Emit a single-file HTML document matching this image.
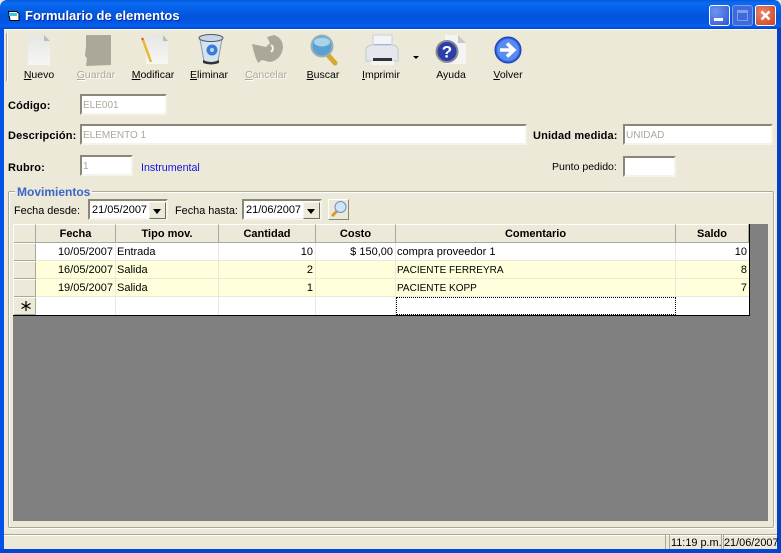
<!DOCTYPE html>
<html><head><meta charset="utf-8"><style>
html,body{margin:0;padding:0;background:#ece9d8}
#w{position:relative;width:781px;height:553px;overflow:hidden;background:#ece9d8;font-family:"Liberation Sans",sans-serif;font-size:11px;color:#000}
#w div{position:absolute;box-sizing:border-box;white-space:nowrap}
.tl{top:69px;width:60px;text-align:center;line-height:13px;font-size:10.500px}
.dis{color:#aca899;text-shadow:1px 1px 0 #fff}
u{text-decoration:underline}
.lb{font-weight:bold;line-height:14px;letter-spacing:.15px}
.in{background:#fff;border:2px solid;border-color:#8a8778 #f5f4ea #f5f4ea #8a8778;color:#aca899;padding:3px 1px 0;line-height:13px;font-size:10px}
.hd{top:224px;height:19px;background:#ece9d8;border-right:1px solid #aca899;border-bottom:1px solid #aca899;border-top:1px solid #fff;font-weight:bold;text-align:center;line-height:19px}
.rh{left:14px;width:22px;height:18px;background:#ece9d8;border-top:1px solid #fff;border-right:1px solid #aca899;border-bottom:1px solid #aca899}
.c{height:18px;line-height:19px;border-right:1px solid #ece9d8;border-bottom:1px solid #ece9d8;padding:0 2px 0 1px}
.up{font-size:10px}
.r{text-align:right}
.dp{background:#fff;border:2px solid;border-color:#8a8778 #f5f4ea #f5f4ea #8a8778;line-height:19px;font-size:11px;padding-left:2px}
.btn{width:17px;height:17px;background:#ece9d8;border:1px solid;border-color:#f5f4ea #716f64 #716f64 #f5f4ea;box-shadow:0 0 0 0 #000}
.btn:after{content:"";position:absolute;left:3px;top:6px;border-left:4.500px solid transparent;border-right:4.500px solid transparent;border-top:5px solid #000}
</style></head><body><div id="w">

<!-- title bar -->
<div style="left:0;top:0;width:781px;height:29px;background:linear-gradient(180deg,#0758d8 0,#0a6cf2 3px,#0562ea 8px,#0255dc 16px,#0355e4 22px,#0460f0 26px,#0346cc 29px);border-radius:7px 7px 0 0"></div>
<div style="left:0;top:29px;width:4px;height:524px;background:#0552e6"></div>
<div style="left:777px;top:29px;width:4px;height:524px;background:#0340c8"></div>
<div style="left:0;top:549px;width:781px;height:4px;background:#0346d4"></div>
<svg style="position:absolute;left:7px;top:10px" width="14" height="12"><path d="M1.500 1.500h8l2.500 2v7H3z" fill="#fff" stroke="#000"/><rect x="2" y="3" width="8" height="3" fill="#3ccbd4"/></svg>
<div style="left:25px;top:8px;color:#fff;font-weight:bold;font-size:13px;line-height:16px;text-shadow:1px 1px 0 #0a2a9a">Formulario de elementos</div>
<!-- window buttons -->
<div style="left:709px;top:5px;width:21px;height:21px;border:1px solid #fff;border-radius:3px;background:radial-gradient(circle at 30% 30%,#6f94f0,#2d55d8)"></div>
<div style="left:714px;top:18px;width:9px;height:3px;background:#fff"></div>
<div style="left:732px;top:5px;width:21px;height:21px;border:1px solid #7e9fe8;border-radius:3px;background:#3f69dc"></div>
<div style="left:737px;top:10px;width:11px;height:11px;border:1px solid #7e9fe8;border-top:3px solid #7e9fe8"></div>
<div style="left:755px;top:5px;width:21px;height:21px;border:1px solid #fff;border-radius:3px;background:radial-gradient(circle at 35% 35%,#e88a6c,#c8401c)"></div>
<svg style="position:absolute;left:760px;top:10px" width="11" height="11"><path d="M1.500 1.500l8 8M9.500 1.500l-8 8" stroke="#fff" stroke-width="2.400"/></svg>

<!-- toolbar -->
<div style="left:4px;top:29px;width:773px;height:1px;background:#fff"></div>
<div style="left:6px;top:33px;width:2px;height:48px;background:#aca899;border-right:1px solid #fff"></div>

<svg style="position:absolute;left:26px;top:34px" width="26" height="32"><defs><linearGradient id="g" x1="0" y1="0" x2="0" y2="1"><stop offset="0" stop-color="#e6e6e4"/><stop offset="1" stop-color="#f6f6f2"/></linearGradient></defs><path d="M2 1h16l6 6v24H2z" fill="url(#g)"/><path d="M18 1v6h6z" fill="#bbb"/></svg>
<svg style="position:absolute;left:84px;top:35px" width="28" height="31"><path d="M2 0h25v30l-25 1 1-8-2-2 1-10z" fill="#aca899"/></svg>
<svg style="position:absolute;left:141px;top:34px" width="28" height="32"><path d="M5 1h17l5 6v23H5z" fill="url(#g)"/><path d="M22 1v6h5z" fill="#bbb"/><path d="M2 6l8 22" stroke="#e8b838" stroke-width="2.500"/><path d="M1 4l1 2" stroke="#c05030" stroke-width="2"/></svg>
<svg style="position:absolute;left:197px;top:33px" width="28" height="33"><path d="M3 6l4 22q7 3 14 0l4-22q-11 4-22 0z" fill="#d4e4f0" stroke="#8a9aa8"/><ellipse cx="14" cy="5" rx="12" ry="3.500" fill="#c6d8e4" stroke="#556"/><path d="M6 27q8 4 16 0l0 3q-8 3-16 0z" fill="#333"/><circle cx="15" cy="17" r="5.500" fill="#3a7ad8"/><circle cx="15" cy="17" r="2" fill="#bcd8f4"/></svg>
<svg style="position:absolute;left:251px;top:34px" width="34" height="32"><path d="M1 10L15 13L19 9L16 3L23 1Q32 4 32 14Q30 26 19 28L11 26L7 29Q3 21 1 10z" fill="#aca899"/><path d="M20 11q4 3 0 7" fill="none" stroke="#f5f4ea" stroke-width="2"/></svg>
<svg style="position:absolute;left:310px;top:34px" width="28" height="32"><path d="M17 20l8 9" stroke="#d8a830" stroke-width="5" stroke-linecap="round"/><circle cx="12" cy="12" r="10.500" fill="#5aa0d0" stroke="#9ab0b8" stroke-width="2"/><ellipse cx="12" cy="8" rx="8" ry="4.500" fill="#a8d4ec"/></svg>
<svg style="position:absolute;left:365px;top:34px" width="34" height="32"><path d="M8 1h19v14H8z" fill="#f4f4f8" stroke="#ccd"/><rect x="9" y="10" width="17" height="8" fill="#7ea0dc"/><path d="M1 16q0-4 6-5h21q5 1 5 5v11H1z" fill="#e4e8ee" stroke="#bcc"/><rect x="8" y="24" width="19" height="3" fill="#333"/><rect x="6" y="27" width="23" height="4" fill="#f4f4f4"/></svg>
<svg style="position:absolute;left:413px;top:56px" width="6" height="3"><path d="M0 0h6L3 3z" fill="#000"/></svg>
<svg style="position:absolute;left:435px;top:34px" width="32" height="31"><path d="M10 1h13l8 8v21H10z" fill="#f4f4f2"/><path d="M23 1v8h8z" fill="#c8c8c8"/><circle cx="12" cy="17.500" r="10.500" fill="#2c3fa8" stroke="#8a8a92" stroke-width="2"/><text x="12" y="23.500" text-anchor="middle" font-family="Liberation Sans" font-weight="bold" font-size="17" fill="#fff">?</text></svg>
<svg style="position:absolute;left:494px;top:36px" width="28" height="28"><circle cx="14" cy="14" r="13" fill="#2a62e0" stroke="#1a3cb0"/><circle cx="14" cy="14" r="11" fill="#5a8cf0"/><path d="M6 14h12M13 7.500l7 6.500-7 6.500" fill="none" stroke="#fff" stroke-width="3.500"/></svg>

<div class="tl" style="left:9px"><u>N</u>uevo</div>
<div class="tl dis" style="left:66px"><u>G</u>uardar</div>
<div class="tl" style="left:123px"><u>M</u>odificar</div>
<div class="tl" style="left:179px"><u>E</u>liminar</div>
<div class="tl dis" style="left:236px"><u>C</u>ancelar</div>
<div class="tl" style="left:293px"><u>B</u>uscar</div>
<div class="tl" style="left:351px"><u>I</u>mprimir</div>
<div class="tl" style="left:421px">Ayuda</div>
<div class="tl" style="left:478px"><u>V</u>olver</div>

<!-- form -->
<div class="lb" style="left:8px;top:99px">Código:</div>
<div class="in" style="left:80px;top:94px;width:87px;height:21px">ELE001</div>
<div class="lb" style="left:8px;top:129px">Descripción:</div>
<div class="in" style="left:80px;top:124px;width:447px;height:21px">ELEMENTO 1</div>
<div class="lb" style="left:533px;top:129px">Unidad medida:</div>
<div class="in" style="left:623px;top:124px;width:150px;height:21px">UNIDAD</div>
<div class="lb" style="left:8px;top:161px">Rubro:</div>
<div class="in" style="left:80px;top:155px;width:53px;height:21px">1</div>
<div style="left:141px;top:161px;color:#1414e0;line-height:14px;font-size:10.700px">Instrumental</div>
<div style="left:552px;top:160px;line-height:14px;font-size:10.500px">Punto pedido:</div>
<div class="in" style="left:623px;top:156px;width:53px;height:21px"></div>

<!-- group -->
<div style="left:8px;top:191px;width:766px;height:337px;border:1px solid #aca899;box-shadow:inset 1px 1px 0 #fff,1px 1px 0 #fff;border-radius:2px"></div>
<div style="left:15px;top:185px;background:#ece9d8;padding:0 2px;color:#3c64c8;font-weight:bold;font-size:12px;line-height:15px">Movimientos</div>
<div style="left:14px;top:204px;line-height:14px;font-size:10.900px">Fecha desde:</div>
<div class="dp" style="left:88px;top:199px;width:80px;height:21px">21/05/2007<div class="btn" style="left:59px;top:1px"></div></div>
<div style="left:175px;top:204px;line-height:14px;font-size:10.900px">Fecha hasta:</div>
<div class="dp" style="left:242px;top:199px;width:80px;height:21px">21/06/2007<div class="btn" style="left:59px;top:1px"></div></div>
<div style="left:328px;top:199px;width:21px;height:21px;background:#ece9d8;border:1px solid;border-color:#fff #8a8778 #8a8778 #fff"></div>
<svg style="position:absolute;left:330px;top:200px" width="18" height="18"><path d="M7 11l-5 5" stroke="#d89830" stroke-width="3"/><circle cx="10.500" cy="7" r="5.500" fill="#cfe4f4" stroke="#6a90c0"/></svg>

<!-- grid -->
<div style="left:13px;top:224px;width:755px;height:297px;background:#808080"></div>
<div style="left:13px;top:224px;width:737px;height:92px;background:#fff;border-right:1px solid #000;border-bottom:1px solid #000"></div>

<div class="hd" style="left:14px;width:22px"></div>
<div class="hd" style="left:36px;width:80px">Fecha</div>
<div class="hd" style="left:116px;width:103px">Tipo mov.</div>
<div class="hd" style="left:219px;width:97px">Cantidad</div>
<div class="hd" style="left:316px;width:80px">Costo</div>
<div class="hd" style="left:396px;width:280px">Comentario</div>
<div class="hd" style="left:676px;width:73px">Saldo</div>

<div style="left:36px;top:261px;width:713px;height:36px;background:#ffffdc"></div>
<div class="rh" style="top:243px"></div><div class="rh" style="top:261px"></div><div class="rh" style="top:279px"></div><div class="rh" style="top:297px"></div>
<svg style="position:absolute;left:21px;top:301px" width="10" height="10"><path d="M5 0v10M0.500 2.500l9 5M9.500 2.500l-9 5" stroke="#000" stroke-width="1.200"/></svg>

<div class="c r" style="left:36px;top:243px;width:80px">10/05/2007</div><div class="c" style="left:116px;top:243px;width:103px">Entrada</div><div class="c r" style="left:219px;top:243px;width:97px">10</div><div class="c r" style="left:316px;top:243px;width:80px">$ 150,00</div><div class="c" style="left:396px;top:243px;width:280px">compra proveedor 1</div><div class="c r" style="left:676px;top:243px;width:73px;border-right:0">10</div>

<div class="c r" style="left:36px;top:261px;width:80px">16/05/2007</div><div class="c" style="left:116px;top:261px;width:103px">Salida</div><div class="c r" style="left:219px;top:261px;width:97px">2</div><div class="c r" style="left:316px;top:261px;width:80px"></div><div class="c up" style="left:396px;top:261px;width:280px">PACIENTE FERREYRA</div><div class="c r" style="left:676px;top:261px;width:73px;border-right:0">8</div>

<div class="c r" style="left:36px;top:279px;width:80px">19/05/2007</div><div class="c" style="left:116px;top:279px;width:103px">Salida</div><div class="c r" style="left:219px;top:279px;width:97px">1</div><div class="c r" style="left:316px;top:279px;width:80px"></div><div class="c up" style="left:396px;top:279px;width:280px">PACIENTE KOPP</div><div class="c r" style="left:676px;top:279px;width:73px;border-right:0">7</div>

<div class="c" style="left:36px;top:297px;width:80px;border-bottom:0"></div><div class="c" style="left:116px;top:297px;width:103px;border-bottom:0"></div><div class="c" style="left:219px;top:297px;width:97px;border-bottom:0"></div><div class="c" style="left:316px;top:297px;width:80px;border-bottom:0"></div>
<div style="left:396px;top:297px;width:280px;height:18px;border:1px dotted #000"></div>

<!-- status bar -->
<div style="left:4px;top:534px;width:773px;height:1px;background:#aca899"></div>
<div style="left:4px;top:535px;width:773px;height:1px;background:#fff"></div>
<div style="left:4px;top:535px;width:662px;height:14px;border-right:1px solid #aca899"></div>
<div style="left:669px;top:535px;width:53px;height:14px;border-left:1px solid #aca899;border-right:1px solid #aca899;line-height:16px;padding-left:1px;font-size:10.900px">11:19 p.m.</div>
<div style="left:723px;top:535px;width:54px;height:14px;border-left:1px solid #aca899;line-height:16px;font-size:10.900px">21/06/2007</div>
</div></body></html>
